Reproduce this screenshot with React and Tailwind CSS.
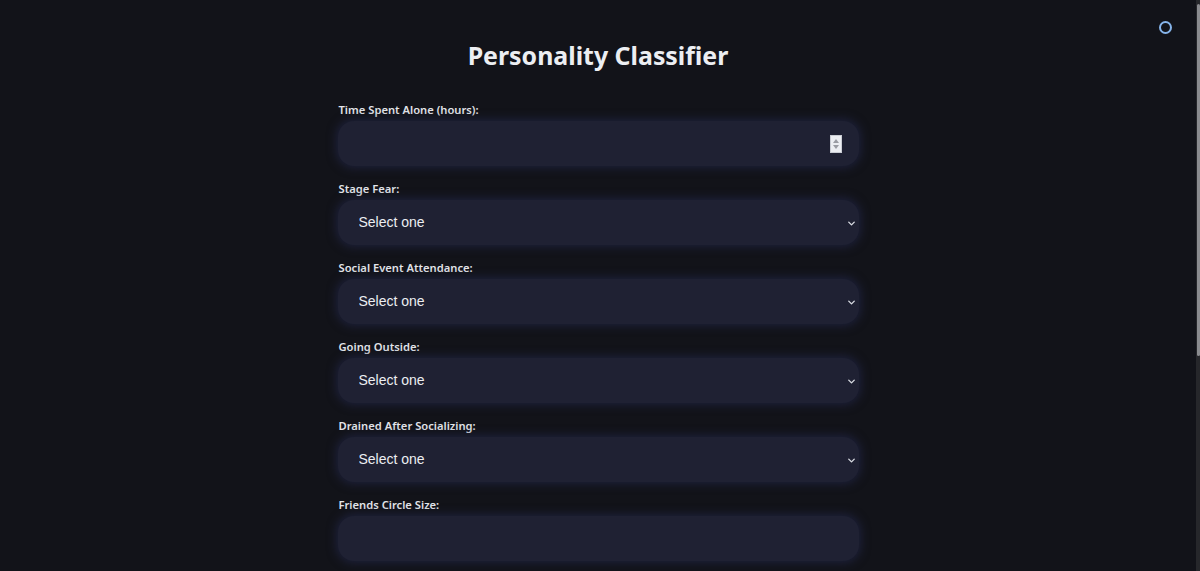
import { ChevronDown } from 'lucide-react';

const selects = ['Stage Fear:', 'Social Event Attendance:', 'Going Outside:', 'Drained After Socializing:'];

const fieldBox =
  'w-full h-[45px] rounded-2xl bg-[#1f2133] shadow-[0_0_10px_2px_rgba(34,38,70,0.75)] outline-none';

function Label({ children }) {
  return (
    <label className="block text-[11.2px] leading-4 font-semibold text-[#e4e6eb] mb-[3px] pl-[1px]">
      {children}
    </label>
  );
}

function Spinner() {
  // native-looking number spin buttons
  return (
    <div className="absolute right-[17px] top-[14px] w-[12px] h-[18px] bg-[#eceef2] border border-[#c9ccd3] flex flex-col items-center justify-center gap-[2px]">
      <svg width="6" height="4" viewBox="0 0 6 4"><path d="M3 0L6 4H0Z" fill="#9a9ca3" /></svg>
      <svg width="6" height="4" viewBox="0 0 6 4"><path d="M0 0H6L3 4Z" fill="#9a9ca3" /></svg>
    </div>
  );
}

export default function App() {
  return (
    <div className="relative h-[571px] overflow-hidden bg-[#121319] font-['Noto_Sans','Open_Sans',sans-serif]">
      {/* top-right status ring */}
      <div className="absolute right-[28px] top-[21px] w-[13px] h-[13px] rounded-full border-2 border-[#86b4ea]" />

      {/* thin scrollbar */}
      <div className="absolute right-0 top-0 h-full w-[4px] bg-[#26272b]">
        <div className="mt-[4px] h-[352px] w-[3px] ml-[1px] bg-[#8a8b8f] rounded-sm" />
      </div>

      <div className="w-[1196px]">
        <h1 className="pt-[39px] text-center text-[24.9px] leading-8 font-bold text-[#eceef2]">
          Personality Classifier
        </h1>

        <div className="w-[521px] mx-auto mt-[31px] flex flex-col gap-[15px]">
          <div>
            <Label>Time Spent Alone (hours):</Label>
            <div className="relative">
              <input type="text" className={fieldBox + ' px-5 text-white'} />
              <Spinner />
            </div>
          </div>

          {selects.map((s) => (
            <div key={s}>
              <Label>{s}</Label>
              <div className="relative">
                <select
                  defaultValue=""
                  className={fieldBox + " appearance-none pl-[21px] text-[14px] text-[#eceef2] font-['Liberation_Sans',Arial,sans-serif]"}
                >
                  <option value="">Select one</option>
                  <option>Yes</option>
                  <option>No</option>
                </select>
                <ChevronDown
                  size={11}
                  strokeWidth={3}
                  className="absolute right-[2px] top-[18px] text-[#d8dbe2] pointer-events-none"
                />
              </div>
            </div>
          ))}

          <div>
            <Label>Friends Circle Size:</Label>
            <input type="text" className={fieldBox + ' px-5 text-white'} />
          </div>
        </div>
      </div>
    </div>
  );
}
